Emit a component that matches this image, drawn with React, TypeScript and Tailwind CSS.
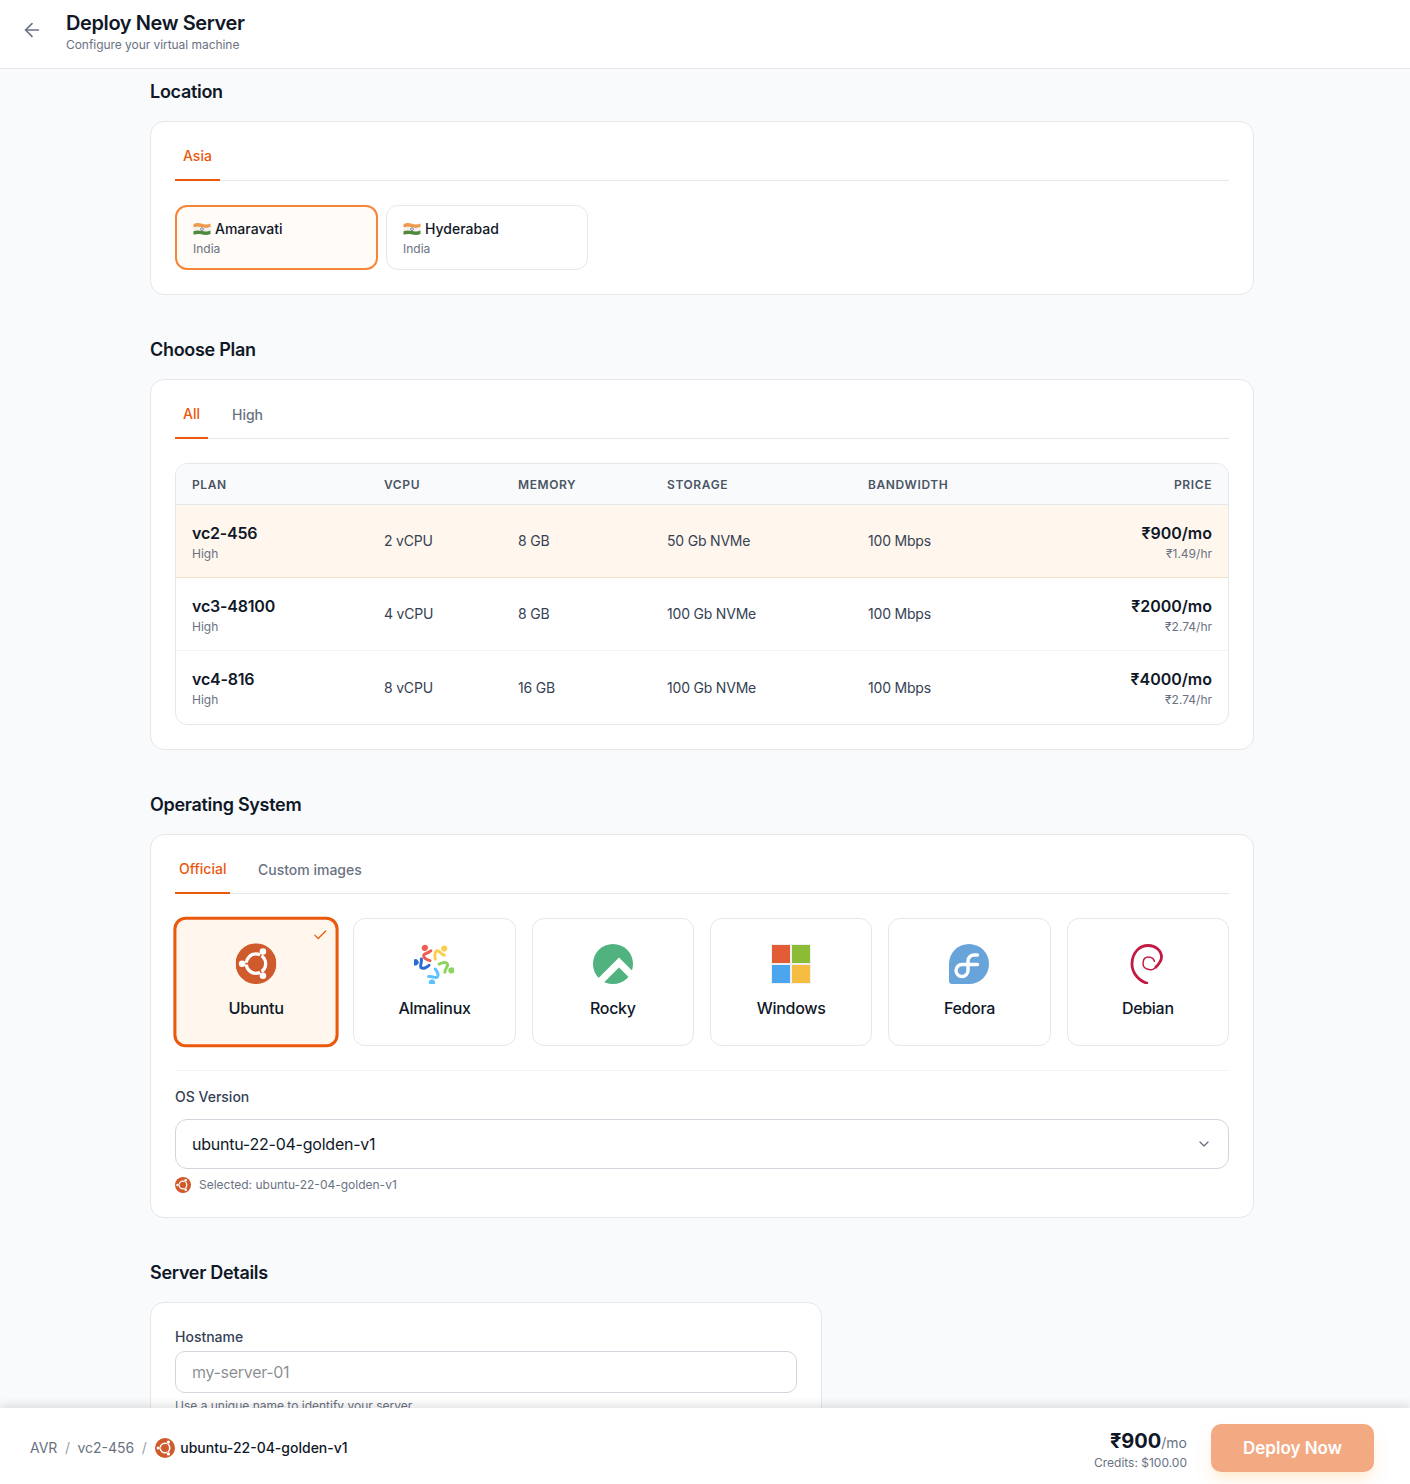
import { ArrowLeft, Check, ChevronDown } from "lucide-react";

function Flag() {
  return (
    <svg width="18" height="14" viewBox="0 0 18 14" className="shrink-0">
      <path d="M0.5 2.2C3 0.8 6 0.8 9 1.8C12 2.8 15 2.6 17.5 1.4V5C15 6 12 6.2 9 5.4C6 4.6 3 4.6 0.5 5.6Z" fill="#ee9a4d" />
      <path d="M0.5 5.6C3 4.6 6 4.6 9 5.4C12 6.2 15 6 17.5 5V8.6C15 9.6 12 9.8 9 9C6 8.2 3 8.2 0.5 9.2Z" fill="#f4f1ea" />
      <path d="M0.5 9.2C3 8.2 6 8.2 9 9C12 9.8 15 9.6 17.5 8.6V12C15 13 12 13.2 9 12.4C6 11.6 3 11.8 0.5 12.8Z" fill="#4f8a3c" />
      <circle cx="9" cy="7.2" r="1.4" fill="none" stroke="#35407e" strokeWidth="0.6" />
    </svg>
  );
}

function UbuntuLogo({ size }: { size: number }) {
  return (
    <svg width={size} height={size} viewBox="0 0 40 40" className="shrink-0">
      <circle cx="20" cy="20" r="20" fill="#cf5a2c" />
      <circle cx="20" cy="20" r="9.5" fill="none" stroke="#fff" strokeWidth="3.2" />
      <g stroke="#cf5a2c" strokeWidth="1.6">
        <path d="M23 14.8L27.2 7.5" />
        <path d="M23 25.2L27.2 32.5" />
        <path d="M14 20H6" />
      </g>
      <circle cx="26.8" cy="8.2" r="3.2" fill="#fff" />
      <circle cx="26.8" cy="31.8" r="3.2" fill="#fff" />
      <circle cx="6.4" cy="20" r="3.2" fill="#fff" />
    </svg>
  );
}

function AlmaLogo() {
  const figures = [
    { c: "#fbce50", r: 0 },
    { c: "#8cd45a", r: 77 },
    { c: "#5cc2ff", r: 153 },
    { c: "#2a6cd4", r: 242 },
    { c: "#ee5c52", r: 297 },
  ];
  return (
    <svg width="40" height="40" viewBox="-20 -20 40 40" className="shrink-0">
      {figures.map((f) => (
        <g key={f.c} transform={`rotate(${f.r})`}>
          <circle cx="10.2" cy="-15.5" r="3.1" fill={f.c} />
          <path d="M1.2 -5C0.4 -9 1 -12.5 3.2 -13.2C5.6 -13.4 6.6 -9.8 10.4 -8.8" fill="none" stroke={f.c} strokeWidth="3" strokeLinecap="round" />
        </g>
      ))}
    </svg>
  );
}

function RockyLogo() {
  return (
    <svg width="40" height="40" viewBox="0 0 40 40" className="shrink-0">
      <circle cx="20" cy="20" r="20" fill="#4fb27f" />
      <path d="M4 40.5L26 18.5L46 38.5" fill="none" stroke="#fff" strokeWidth="7" />
    </svg>
  );
}

function WindowsLogo() {
  return (
    <svg width="40" height="40" viewBox="0 0 40 40" className="shrink-0">
      <rect x="0" y="0" width="40" height="40" fill="#f0f0f0" />
      <rect x="1" y="1" width="18" height="18" fill="#e25c35" />
      <rect x="21" y="1" width="18" height="18" fill="#8cbb35" />
      <rect x="1" y="21" width="18" height="18" fill="#4ba5ef" />
      <rect x="21" y="21" width="18" height="18" fill="#f5be42" />
    </svg>
  );
}

function FedoraLogo() {
  return (
    <svg width="40" height="40" viewBox="0 0 40 40" className="shrink-0">
      <path d="M20 0A20 20 0 1 1 20 40H3A3 3 0 0 1 0 37V20A20 20 0 0 1 20 0Z" fill="#68a3d9" />
      <path d="M28.5 11H25A6 6 0 0 0 19 17V26.5A6 6 0 1 1 13 20.5H28.5" fill="none" stroke="#fff" strokeWidth="3.4" strokeLinecap="round" />
    </svg>
  );
}

function DebianLogo() {
  return (
    <svg width="40" height="40" viewBox="0 0 40 40" className="shrink-0">
      <path d="M20 39.5C10 37 3.5 28 4 19C4.5 8 12 1.5 20 1.5C28 1.5 33.5 7 33.5 13C33.5 18 30 21 27 24" fill="none" stroke="#c31a43" strokeWidth="2.8" />
      <path d="M27 24C25 26 23 26 21.5 25.6C17 25 15 23 15 19.5C15 15 17.5 13 20.5 13C23.5 13 26.5 15 26.5 18" fill="none" stroke="#c31a43" strokeWidth="1.5" />
    </svg>
  );
}

const plans = [
  { name: "vc2-456", cpu: "2 vCPU", mem: "8 GB", disk: "50 Gb NVMe", bw: "100 Mbps", price: "₹900/mo", hr: "₹1.49/hr", active: true },
  { name: "vc3-48100", cpu: "4 vCPU", mem: "8 GB", disk: "100 Gb NVMe", bw: "100 Mbps", price: "₹2000/mo", hr: "₹2.74/hr", active: false },
  { name: "vc4-816", cpu: "8 vCPU", mem: "16 GB", disk: "100 Gb NVMe", bw: "100 Mbps", price: "₹4000/mo", hr: "₹2.74/hr", active: false },
];

const osList = [
  { name: "Almalinux", logo: <AlmaLogo /> },
  { name: "Rocky", logo: <RockyLogo /> },
  { name: "Windows", logo: <WindowsLogo /> },
  { name: "Fedora", logo: <FedoraLogo /> },
  { name: "Debian", logo: <DebianLogo /> },
];

function ActiveTab({ label }: { label: string }) {
  return (
    <div className="-mb-px flex h-[35px] items-start border-b-2 border-[#ea580c] px-2 text-sm leading-5 font-medium text-[#ea580c]">
      {label}
    </div>
  );
}

function Location({ name, active }: { name: string; active?: boolean }) {
  return (
    <div
      className={
        active
          ? "h-[65px] w-[203px] rounded-xl border-2 border-[#f58538] bg-[#fffbf7] px-4 pt-[12px]"
          : "h-[65px] w-[202px] rounded-xl border border-gray-200 bg-white px-4 pt-[13px]"
      }
    >
      <div className="flex h-5 items-center gap-1 text-sm leading-5 font-medium text-gray-900">
        <Flag />
        <span>{name}</span>
      </div>
      <div className="mt-[2px] text-xs leading-4 text-gray-500">India</div>
    </div>
  );
}

function SectionTitle({ children }: { children: string }) {
  return <h2 className="mb-[14px] text-lg leading-[30px] font-semibold tracking-[-0.3px]">{children}</h2>;
}

export default function App() {
  return (
    <div className="relative h-[1484px] overflow-hidden bg-gray-50 font-[family-name:Inter,sans-serif] text-gray-900">
      <header className="flex h-[69px] items-start border-b border-gray-200 bg-white pt-[9px] pl-[21px]">
        <ArrowLeft size={22} strokeWidth={1.8} className="mt-[10px] text-gray-500" />
        <div className="ml-[23px]">
          <h1 className="text-xl leading-7 font-semibold tracking-[-0.4px]">Deploy New Server</h1>
          <p className="text-xs leading-4 tracking-[-0.05px] text-gray-500">Configure your virtual machine</p>
        </div>
      </header>

      <main className="ml-[150px] w-[1104px] pt-2">
        <section>
          <SectionTitle>Location</SectionTitle>
          <div className="rounded-[14px] border border-gray-200 bg-white p-6">
            <div className="flex h-[35px] border-b border-gray-200">
              <ActiveTab label="Asia" />
            </div>
            <div className="mt-6 flex gap-2">
              <Location name="Amaravati" active />
              <Location name="Hyderabad" />
            </div>
          </div>
        </section>

        <section className="mt-10">
          <SectionTitle>Choose Plan</SectionTitle>
          <div className="rounded-[14px] border border-gray-200 bg-white p-6">
            <div className="flex h-[35px] gap-2 border-b border-gray-200">
              <ActiveTab label="All" />
              <div className="px-4 pt-[1px] text-sm leading-5 font-medium text-gray-500">High</div>
            </div>
            <div className="mt-6 overflow-hidden rounded-xl border border-gray-200">
              <table className="w-full table-fixed border-collapse">
                <colgroup>
                  <col className="w-[192px]" />
                  <col className="w-[134px]" />
                  <col className="w-[149px]" />
                  <col className="w-[201px]" />
                  <col className="w-[200px]" />
                  <col />
                </colgroup>
                <thead>
                  <tr className="h-[40px] border-b border-gray-200 bg-gray-50 text-left text-xs tracking-wider text-gray-600">
                    <th className="px-4 pt-[2px] font-semibold">PLAN</th>
                    <th className="px-4 pt-[2px] font-semibold">VCPU</th>
                    <th className="px-4 pt-[2px] font-semibold">MEMORY</th>
                    <th className="px-4 pt-[2px] font-semibold">STORAGE</th>
                    <th className="px-4 pt-[2px] font-semibold">BANDWIDTH</th>
                    <th className="px-4 pt-[2px] text-right font-semibold">PRICE</th>
                  </tr>
                </thead>
                <tbody className="text-sm tracking-[-0.2px] text-gray-700">
                  {plans.map((p, i) => (
                    <tr
                      key={p.name}
                      className={
                        p.active
                          ? "h-[73px] border-b border-[#f2e0c4] bg-orange-50"
                          : i === 1
                            ? "h-[73px] border-b border-gray-100"
                            : "h-[74px]"
                      }
                    >
                      <td className="px-4 pt-[1px]">
                        <div className="text-base leading-6 font-semibold tracking-[-0.2px] text-gray-900">{p.name}</div>
                        <div className="mt-[1px] text-xs leading-4 tracking-normal text-gray-500">High</div>
                      </td>
                      <td className="px-4 pt-[1px]">{p.cpu}</td>
                      <td className="px-4 pt-[1px]">{p.mem}</td>
                      <td className="px-4 pt-[1px]">{p.disk}</td>
                      <td className="px-4 pt-[1px]">{p.bw}</td>
                      <td className="px-4 pt-[1px] text-right">
                        <div className="text-base leading-6 font-semibold tracking-normal text-gray-900">{p.price}</div>
                        <div className="mt-[1px] text-xs leading-4 tracking-normal text-gray-500">{p.hr}</div>
                      </td>
                    </tr>
                  ))}
                </tbody>
              </table>
            </div>
          </div>
        </section>

        <section className="mt-10">
          <SectionTitle>Operating System</SectionTitle>
          <div className="rounded-[14px] border border-gray-200 bg-white p-6">
            <div className="flex h-[35px] gap-[27.5px] border-b border-gray-200">
              <div className="-mb-px flex h-[35px] border-b-2 border-[#ea580c] px-1 text-sm leading-5 font-medium text-[#ea580c]">
                Official
              </div>
              <div className="pt-[1px] text-sm leading-5 font-medium text-gray-500">Custom images</div>
            </div>
            <div className="mt-6 grid grid-cols-6 gap-4">
              <div className="relative flex h-32 scale-[1.02] flex-col items-center rounded-xl border-[3px] border-[#ea580c] bg-orange-50 pt-[23px]">
                <Check size={16} strokeWidth={1.8} className="absolute top-[7px] right-[7px] text-[#ea580c]" />
                <UbuntuLogo size={40} />
                <div className="mt-[11px] text-base leading-6 font-medium tracking-[-0.3px]">Ubuntu</div>
              </div>
              {osList.map((o) => (
                <div key={o.name} className="flex h-32 flex-col items-center rounded-xl border border-gray-200 bg-white pt-[25px]">
                  {o.logo}
                  <div className="mt-3 text-base leading-6 font-medium tracking-[-0.3px]">{o.name}</div>
                </div>
              ))}
            </div>
            <div className="mt-6 border-t border-gray-100 pt-4">
              <div className="text-sm leading-5 font-medium text-gray-700">OS Version</div>
              <div className="mt-3 flex h-[50px] items-center justify-between rounded-xl border border-gray-300 bg-white px-4 text-base tracking-[-0.23px]">
                <span>ubuntu-22-04-golden-v1</span>
                <ChevronDown size={16} className="text-gray-500" />
              </div>
              <div className="mt-2 flex h-4 items-center gap-2 text-xs leading-4 text-gray-500">
                <UbuntuLogo size={16} />
                <span>Selected: ubuntu-22-04-golden-v1</span>
              </div>
            </div>
          </div>
        </section>

        <section className="mt-10">
          <SectionTitle>Server Details</SectionTitle>
          <div className="w-[672px] rounded-[14px] border border-gray-200 bg-white p-6">
            <label className="block text-sm leading-5 font-medium text-gray-700">Hostname</label>
            <input
              readOnly
              placeholder="my-server-01"
              className="mt-1 block h-[42px] w-full rounded-[10px] border border-gray-300 bg-white px-4 text-base tracking-[-0.3px] outline-none"
            />
            <p className="mt-[5px] text-xs leading-4 text-gray-500">Use a unique name to identify your server</p>
            <div className="h-24" />
          </div>
        </section>
      </main>

      <footer className="absolute inset-x-0 bottom-0 flex h-[76px] items-center justify-between bg-white pt-1 pr-9 pl-[30px] shadow-[0_-4px_8px_rgba(0,0,0,0.1)]">
        <div className="flex items-center gap-[7.5px] text-sm text-gray-500">
          <span>AVR</span>
          <span className="text-gray-400">/</span>
          <span>vc2-456</span>
          <span className="text-gray-400">/</span>
          <div className="ml-[1px] flex items-center gap-[5px]">
            <UbuntuLogo size={20} />
            <span className="font-medium text-gray-900">ubuntu-22-04-golden-v1</span>
          </div>
        </div>
        <div className="flex items-center gap-6">
          <div className="mt-[1px] text-right">
            <div className="leading-6">
              <span className="text-xl font-bold text-gray-900">₹900</span>
              <span className="text-sm text-gray-500">/mo</span>
            </div>
            <div className="text-xs leading-4 text-gray-500">Credits: $100.00</div>
          </div>
          <div className="flex h-12 w-[163px] items-center justify-center rounded-[10px] bg-[#f3aa82] pt-[2px] text-[17px] font-semibold text-white shadow-lg shadow-orange-100">
            Deploy Now
          </div>
        </div>
      </footer>
    </div>
  );
}
